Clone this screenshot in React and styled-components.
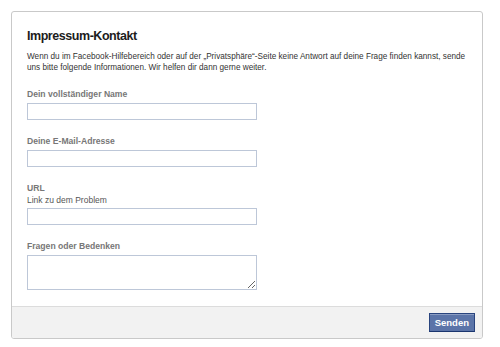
import React from "react";
import styled, { createGlobalStyle } from "styled-components";

const Global = createGlobalStyle`
  body {
    margin: 0;
    background: #fff;
    font-family: "Liberation Sans", Arial, sans-serif;
  }
`;

export default function App() {
  return (
    <React.Fragment>
      <Global />
      <Panel>
        <Body>
          <Title>Impressum-Kontakt</Title>
          <Intro>
            Wenn du im Facebook-Hilfebereich oder auf der „Privatsphäre“-Seite keine Antwort auf deine Frage finden kannst, sende
            <br />
            uns bitte folgende Informationen. Wir helfen dir dann gerne weiter.
          </Intro>
          <Field>
            <Label>Dein vollständiger Name</Label>
            <Input type="text" />
          </Field>
          <Field>
            <Label>Deine E-Mail-Adresse</Label>
            <Input type="text" />
          </Field>
          <Field>
            <Label>URL</Label>
            <Hint>Link zu dem Problem</Hint>
            <Input type="text" />
          </Field>
          <Field>
            <Label>Fragen oder Bedenken</Label>
            <TextArea />
          </Field>
        </Body>
        <Footer>
          <Button>Senden</Button>
        </Footer>
      </Panel>
    </React.Fragment>
  );
}

const Panel = styled.div`
  margin: 11px 17px 0 11px;
  border: 1px solid #c9c9c9;
  border-radius: 3px;
  overflow: hidden;
`;

const Body = styled.div`
  padding: 16px 6px 16px 15px;
`;

const Title = styled.h2`
  margin: 0;
  font-size: 12.5px;
  line-height: 16px;
  font-weight: bold;
  letter-spacing: -0.45px;
  color: #1c1c1c;
`;

const Intro = styled.p`
  margin: 7px 0 0;
  font-size: 8.2px;
  line-height: 11px;
  color: #333;
  white-space: nowrap;
`;

const Field = styled.div`
  margin-top: 15px;
  display: flex;
  flex-direction: column;
  align-items: flex-start;
`;

const Label = styled.label`
  font-size: 8.6px;
  line-height: 12px;
  font-weight: bold;
  color: #777;
  margin-bottom: 3px;
`;

const Hint = styled.span`
  font-size: 8.5px;
  line-height: 12px;
  color: #555;
  margin: -3px 0 2px;
`;

const Input = styled.input`
  box-sizing: border-box;
  width: 230px;
  height: 17px;
  margin: 0;
  border: 1px solid #bdc7d8;
  padding: 2px 3px;
  font-size: 9px;
  outline: none;
`;

const TextArea = styled.textarea`
  box-sizing: border-box;
  width: 230px;
  height: 35px;
  margin: 0;
  border: 1px solid #bdc7d8;
  padding: 2px 3px;
  font-size: 9px;
  outline: none;
`;

const Footer = styled.div`
  display: flex;
  justify-content: flex-end;
  align-items: center;
  height: 31px;
  background: #f2f2f2;
  border-top: 1px solid #dcdcdc;
  padding: 0 7px;
`;

const Button = styled.button`
  height: 19px;
  padding: 0 5px;
  background: #5b74a8;
  border: 1px solid #29447e;
  border-bottom-color: #1a356e;
  box-shadow: inset 0 1px 0 #8a9cc2;
  color: #fff;
  font-family: "Liberation Sans", Arial, sans-serif;
  font-size: 9.5px;
  font-weight: bold;
  cursor: pointer;
`;
